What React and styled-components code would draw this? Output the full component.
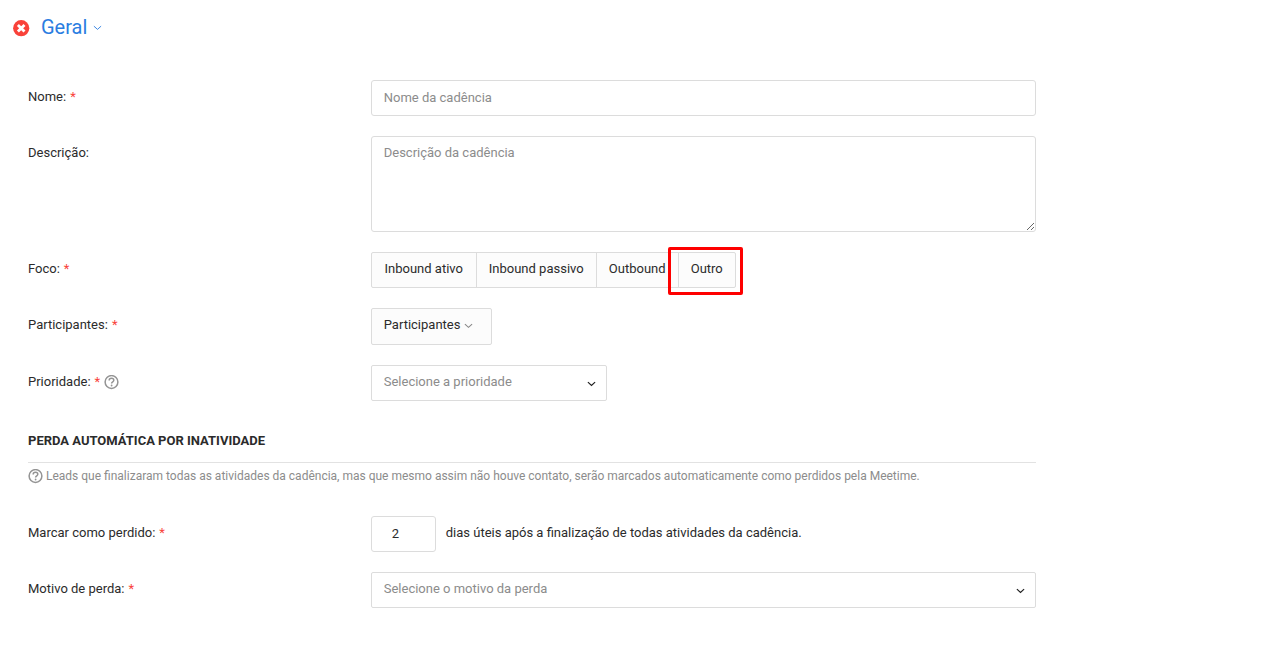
import React, { useState } from "react";
import styled, { createGlobalStyle } from "styled-components";

const FOCUS_OPTIONS = [
  { label: "Inbound ativo", width: 106 },
  { label: "Inbound passivo", width: 121 },
  { label: "Outbound", width: 83 },
  { label: "Outro", width: 58, highlighted: true },
];

const Chevron = ({ size = 9, color = "currentColor", weight = 1.2 }) => (
  <svg width={size} height={size} viewBox="0 0 10 10" fill="none" aria-hidden="true">
    <path d="M1 3.5l4 3.6 4-3.6" stroke={color} strokeWidth={weight} />
  </svg>
);

const HelpIcon = () => (
  <svg width="15" height="15" viewBox="0 0 15 15" fill="none" aria-hidden="true">
    <circle cx="7.5" cy="7" r="6.4" stroke="#949494" strokeWidth="1.5" />
    <path
      d="M5.2 5.4c0-1.4 1-2.1 2.3-2.1s2.3.8 2.3 2c0 1.5-2.2 1.5-2.2 3.2"
      stroke="#949494"
      strokeWidth="1.5"
    />
    <circle cx="7.6" cy="10.5" r="0.9" fill="#949494" />
  </svg>
);

const ErrorIcon = () => (
  <svg width="17" height="17" viewBox="0 0 17 17" role="img" aria-label="Erro">
    <circle cx="8.2" cy="8.2" r="8.1" fill="#f9423a" />
    <path d="M4.9 4.9l6.6 6.6M11.5 4.9l-6.6 6.6" stroke="#fff" strokeWidth="2.8" />
  </svg>
);

const App = () => {
  const [name, setName] = useState("");
  const [description, setDescription] = useState("");
  const [focus, setFocus] = useState("");
  const [priority, setPriority] = useState("");
  const [days, setDays] = useState("2");
  const [reason, setReason] = useState("");

  return (
    <Page>
      <GlobalStyle />

      <Header>
        <ErrorIcon />
        <SectionToggle type="button" aria-expanded="true">
          Geral
          <Chevron weight={1} />
        </SectionToggle>
      </Header>

      <Form onSubmit={(e) => e.preventDefault()}>
        <Row>
          <Label htmlFor="name">
            Nome: <Required>*</Required>
          </Label>
          <Input
            id="name"
            placeholder="Nome da cadência"
            value={name}
            onChange={(e) => setName(e.target.value)}
          />
        </Row>

        <Row>
          <Label htmlFor="description">Descrição:</Label>
          <TextArea
            id="description"
            placeholder="Descrição da cadência"
            value={description}
            onChange={(e) => setDescription(e.target.value)}
          />
        </Row>

        <Row>
          <Label as="div" id="focus-label">
            Foco: <Required>*</Required>
          </Label>
          <ButtonGroup role="group" aria-labelledby="focus-label">
            {FOCUS_OPTIONS.map((option) => (
              <GroupItem key={option.label} $width={option.width}>
                <GroupButton
                  type="button"
                  aria-pressed={focus === option.label}
                  onClick={() => setFocus(option.label)}
                >
                  {option.label}
                </GroupButton>
                {option.highlighted && <Highlight />}
              </GroupItem>
            ))}
          </ButtonGroup>
        </Row>

        <Row>
          <Label htmlFor="participants">
            Participantes: <Required>*</Required>
          </Label>
          <DropdownButton id="participants" type="button" aria-haspopup="true">
            Participantes
            <Chevron color="#888" />
          </DropdownButton>
        </Row>

        <Row>
          <Label htmlFor="priority">
            Prioridade: <Required>*</Required> <HelpIcon />
          </Label>
          <SelectWrap $width="236px">
            <Select
              id="priority"
              value={priority}
              onChange={(e) => setPriority(e.target.value)}
            >
              <option value="">Selecione a prioridade</option>
            </Select>
            <SelectArrow>
              <Chevron color="#222" weight={1.4} />
            </SelectArrow>
          </SelectWrap>
        </Row>

        <LossSection>
          <SectionTitle>PERDA AUTOMÁTICA POR INATIVIDADE</SectionTitle>
          <Hint>
            <HelpIcon />
            <span>
              Leads que finalizaram todas as atividades da cadência, mas que mesmo
              assim não houve contato, serão marcados automaticamente como perdidos
              pela Meetime.
            </span>
          </Hint>
        </LossSection>

        <Row>
          <Label htmlFor="days">
            Marcar como perdido: <Required>*</Required>
          </Label>
          <DaysField>
            <DaysInput
              id="days"
              inputMode="numeric"
              value={days}
              onChange={(e) => setDays(e.target.value)}
            />
            <DaysText>
              dias úteis após a finalização de todas atividades da cadência.
            </DaysText>
          </DaysField>
        </Row>

        <Row>
          <Label htmlFor="reason">
            Motivo de perda: <Required>*</Required>
          </Label>
          <SelectWrap $width="100%">
            <Select
              id="reason"
              value={reason}
              onChange={(e) => setReason(e.target.value)}
            >
              <option value="">Selecione o motivo da perda</option>
            </Select>
            <SelectArrow>
              <Chevron color="#222" weight={1.4} />
            </SelectArrow>
          </SelectWrap>
        </Row>
      </Form>
    </Page>
  );
};

// Styled components
const GlobalStyle = createGlobalStyle`
  * {
    box-sizing: border-box;
  }
  body {
    margin: 0;
    background: #fff;
    color: #2b2b2b;
    font-family: Roboto, "Liberation Sans", sans-serif;
    font-size: 13px;
    line-height: 20px;
  }
  button, input, select, textarea {
    margin: 0;
    font: inherit;
    color: inherit;
  }
`;

const Page = styled.main`
  padding: 12px 13px 36px;
`;

const Header = styled.header`
  display: flex;
  align-items: center;
  gap: 11px;
  height: 32px;
`;

const SectionToggle = styled.button`
  display: flex;
  align-items: center;
  gap: 6px;
  padding: 0 0 2px;
  border: none;
  background: none;
  color: #2a7de1;
  font-size: 20px;
  line-height: 28px;
  cursor: pointer;
`;

const Form = styled.form`
  display: flex;
  flex-direction: column;
  gap: 20px;
  max-width: 1023px;
  padding: 36px 0 0 15px;
`;

const Row = styled.div`
  display: grid;
  grid-template-columns: 34% 66%;
  align-items: start;
  justify-items: start;
`;

const Label = styled.label`
  display: flex;
  align-items: center;
  gap: 4px;
  padding: 7px 0 5px;
`;

const Required = styled.span`
  color: #f9423a;
`;

const Input = styled.input`
  width: 100%;
  height: 36px;
  padding: 6px 12px 8px;
  border: 1px solid #dcdcdc;
  border-radius: 3px;
  background: #fff;
  outline: none;
  &::placeholder {
    color: #8c8c8c;
    opacity: 1;
  }
  &:focus {
    border-color: #2a7de1;
  }
`;

const TextArea = styled(Input).attrs({ as: "textarea" })`
  display: block;
  height: 96px;
  resize: vertical;
`;

const ButtonGroup = styled.div`
  display: flex;
`;

const GroupItem = styled.div`
  position: relative;
  width: ${({ $width }) => $width}px;
  & + & {
    margin-left: -1px;
  }
`;

const GroupButton = styled.button`
  width: 100%;
  height: 36px;
  padding: 0 0 2px;
  border: 1px solid #dcdcdc;
  background: #fcfcfc;
  white-space: nowrap;
  cursor: pointer;
  ${GroupItem}:first-child & {
    border-radius: 2px 0 0 2px;
  }
  ${GroupItem}:last-child & {
    border-radius: 0 2px 2px 0;
  }
`;

const Highlight = styled.span`
  position: absolute;
  inset: -5px -7px -7px -10px;
  border: 3px solid #fe0000;
  border-radius: 2px;
  pointer-events: none;
`;

const DropdownButton = styled.button`
  display: flex;
  align-items: center;
  gap: 4px;
  width: 121px;
  height: 37px;
  padding: 0 12px 3px;
  border: 1px solid #dcdcdc;
  border-radius: 2px;
  background: #fcfcfc;
  cursor: pointer;
`;

const SelectWrap = styled.div`
  position: relative;
  width: ${({ $width }) => $width};
`;

const Select = styled.select`
  display: block;
  width: 100%;
  height: 36px;
  padding: 0 32px 2px 12px;
  border: 1px solid #dcdcdc;
  border-radius: 2px;
  background: #fff;
  color: #8c8c8c;
  appearance: none;
`;

const SelectArrow = styled.span`
  position: absolute;
  top: 3px;
  right: 11px;
  bottom: 3px;
  display: flex;
  align-items: center;
  pointer-events: none;
`;

const LossSection = styled.section`
  padding: 10px 0 10px;
`;

const SectionTitle = styled.h2`
  margin: 0;
  padding-bottom: 11px;
  border-bottom: 1px solid #e2e2e2;
  font-size: 13px;
  font-weight: 700;
`;

const Hint = styled.p`
  display: flex;
  align-items: center;
  gap: 3px;
  margin: 3px 0 0;
  color: #8c8c8c;
  font-size: 12px;
`;

const DaysField = styled.div`
  display: flex;
  gap: 10px;
`;

const DaysInput = styled(Input)`
  width: 65px;
  padding-left: 20px;
`;

const DaysText = styled.span`
  padding: 7px 0 5px;
`;

export default App;
